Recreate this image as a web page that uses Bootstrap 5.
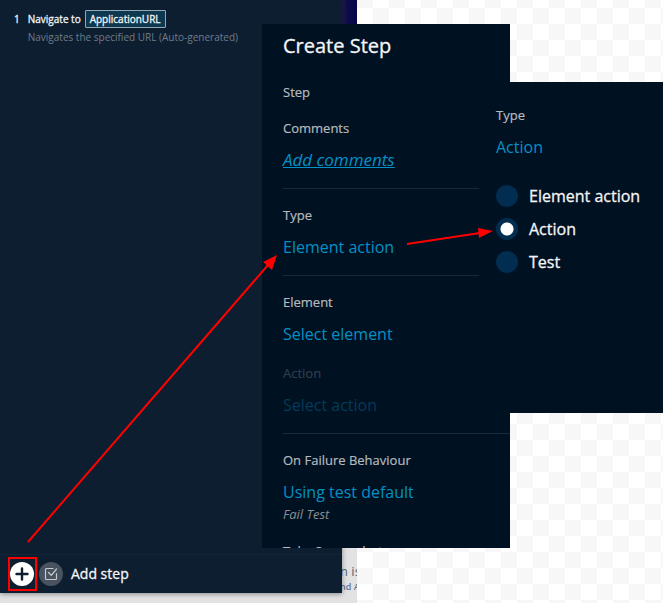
<!DOCTYPE html>
<html lang="en">
<head>
<meta charset="utf-8">
<meta name="viewport" content="width=device-width, initial-scale=1">
<title>Create Step</title>
<link href="https://cdn.jsdelivr.net/npm/bootstrap@5.3.0/dist/css/bootstrap.min.css" rel="stylesheet">
<style>
body{font-family:"Open Sans","Noto Sans",sans-serif;background:#fff conic-gradient(#f7f7f7 25%,#fff 0 50%,#f7f7f7 0 75%,#fff 0) -11px -8px/32px 32px}
.desk{min-height:100vh}
.window{position:absolute;background:#001122}
.backdrop{left:0;top:0;bottom:0;width:357px;background:#e2e2e3}
.edge{position:absolute;left:342px;right:0;top:0;height:40px;background:linear-gradient(90deg,#231c4b,#0b0b4a 40%,#06064a)}
.steps{left:0;top:0;bottom:10px;width:342px;background:#0d1e30;box-shadow:0 1px 5px #0006}
.step-item{padding:9px 14px;gap:8px;font-size:10px;line-height:20px;color:#f2f5f7}
.step-head,.step-no{-webkit-text-stroke:.3px}
.token{background:#0d3850;border:1px solid #93aab5;border-radius:1px;padding:0 4px;line-height:16px;height:18px;color:#f2f5f7;font-size:10px}
.step-note{color:#6f7c88;line-height:16px}
.steps-foot{border-top:1px solid #132537;padding:7px 10px;gap:5px;height:39px}
.round{width:24px;height:24px;border:0;border-radius:50%;padding:0;background:#fff}
.round.dim{background:#48535f}
.add-text{font-size:14px;line-height:24px;color:#f4f6f8;padding-left:3px}
.behind{position:absolute;right:0;bottom:8px;width:17px;line-height:16px;color:#5c6570}
.behind span{display:block;white-space:nowrap;font-size:13px}
.behind a{display:block;white-space:nowrap;font-size:9px;font-weight:600;color:#5c7697;text-decoration:none}
.create{left:262px;top:24px;width:248px;height:524px;padding:10px 0 0 21px}
.create h1{font-size:20px;line-height:24px;margin:0 0 25px;color:#f4f5f6;font-weight:400}
.create h1,.choice,.add-text{-webkit-text-stroke:.3px}
.field{display:flex;flex-direction:column;align-items:flex-start;gap:11px;margin:0}
.next{padding-top:18px}
.name{font-size:13px;line-height:18px;color:#b4babf;font-weight:500;-webkit-text-stroke:.2px}
.value{font-size:16px;line-height:24px;color:#0490c4;text-decoration:none}
.value:hover{color:#20a8dc}
.comment{font-size:17px}
.line{height:1px;background:#182a3a;margin:16px 0 17px;border:0;opacity:1}
.off .name{color:#303e4b}
.off .value{color:#023c59}
.hint{font-size:13px;line-height:20px;color:#8a9096}
.type-panel{left:479px;right:0;top:82px;height:331px;padding:24px 17px}
.choices{gap:9px;padding-top:25px}
.choice{gap:11px;font-size:16px;line-height:24px;color:#f4f5f6}
.choice input{appearance:none;width:22px;height:22px;border-radius:50%;background:#002d50;margin:0}
.choice input:checked{background:radial-gradient(circle,#fff 0 6px,#002d50 7px)}
.notes{position:absolute;left:0;top:0;pointer-events:none}
</style>
</head>
<body>
<main class="desk position-relative overflow-hidden">
  <section class="window backdrop overflow-hidden">
    <div class="edge"></div>
    <div class="behind overflow-hidden"><span>n is</span><a href="#">nd A</a></div>
    <div class="window steps d-flex flex-column">
      <div class="step-item d-flex flex-grow-1">
        <span class="step-no">1</span>
        <div>
          <div class="step-head d-flex align-items-center gap-1"><span>Navigate to</span><button type="button" class="token">ApplicationURL</button></div>
          <div class="step-note">Navigates the specified URL (Auto-generated)</div>
        </div>
      </div>
      <div class="steps-foot d-flex align-items-center">
        <button type="button" class="round d-flex" aria-label="Add"><svg width="24" height="24" viewBox="0 0 24 24"><path d="M12 6.500v11M6.500 12h11" stroke="#0d1e30" stroke-width="2.400" stroke-linecap="round"/></svg></button>
        <button type="button" class="round dim d-flex" aria-label="Check"><svg width="24" height="24" viewBox="0 0 24 24" fill="none" stroke="#c6cbd0" stroke-width="1.200" stroke-linecap="round" stroke-linejoin="round"><path d="M14 6.500H7.500q-1 0-1 1v9q0 1 1 1h9q1 0 1-1V11.500M9.500 10.500l2.800 2.800L17.500 7"/></svg></button>
        <span class="add-text">Add step</span>
      </div>
    </div>
  </section>

  <section class="window create overflow-hidden">
    <h1>Create Step</h1>
    <div class="name">Step</div>
    <div class="field next"><span class="name">Comments</span><a class="value comment fst-italic text-decoration-underline" href="#">Add comments</a></div>
    <hr class="line">
    <div class="field"><span class="name">Type</span><a class="value" href="#">Element action</a></div>
    <hr class="line">
    <div class="field"><span class="name">Element</span><a class="value" href="#">Select element</a></div>
    <div class="field off next"><span class="name">Action</span><a class="value" href="#">Select action</a></div>
    <hr class="line">
    <div class="field"><span class="name">On Failure Behaviour</span><a class="value" href="#">Using test default</a></div>
    <div class="hint fst-italic">Fail Test</div>
    <div class="field next"><span class="name">Take Screenshot</span></div>
  </section>

  <section class="window type-panel">
    <div class="field"><span class="name">Type</span><a class="value" href="#">Action</a></div>
    <div class="choices d-flex flex-column">
      <label class="choice d-flex align-items-center" for="t1"><input type="radio" name="type" id="t1">Element action</label>
      <label class="choice d-flex align-items-center" for="t2"><input type="radio" name="type" id="t2" checked>Action</label>
      <label class="choice d-flex align-items-center" for="t3"><input type="radio" name="type" id="t3">Test</label>
    </div>
  </section>

  <svg class="notes" width="663" height="603" viewBox="0 0 663 603" aria-hidden="true">
    <g stroke="red" stroke-width="2" fill="none"><path d="M28 542L268 265M407 244L480 233"/><rect x="9" y="558" width="27" height="32"/></g>
    <g fill="red"><path d="M277 255L272 270L263 262Z"/><path d="M493 231L479 238L478 228Z"/></g>
  </svg>
</main>
<script src="https://cdn.jsdelivr.net/npm/bootstrap@5.3.0/dist/js/bootstrap.bundle.min.js"></script>
</body>
</html>
